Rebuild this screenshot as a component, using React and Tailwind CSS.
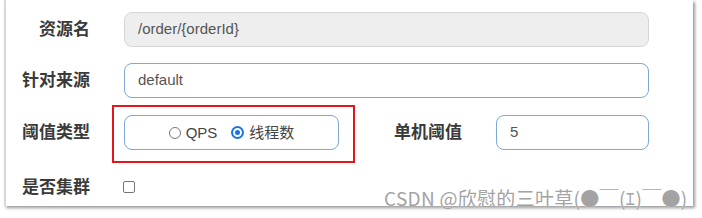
import React from "react";

const labelCls =
  "w-[84px] shrink-0 text-right text-[17px] font-bold text-[#3a3a3a] leading-none";

function Radio({ checked, label }) {
  return (
    <label className="flex items-center gap-[5px]">
      {checked ? (
        <span className="w-[13px] h-[13px] rounded-full bg-[#1a73e8] flex items-center justify-center">
          <span className="w-[9px] h-[9px] rounded-full border-[2px] border-white bg-[#1a73e8]" />
        </span>
      ) : (
        <span className="w-[12px] h-[12px] rounded-full border border-[#767676] bg-white" />
      )}
      <span className="text-[15px] text-[#444] leading-none">{label}</span>
    </label>
  );
}

export default function App() {
  return (
    <div
      className="relative w-[702px] h-[218px] bg-white overflow-hidden"
      style={{ fontFamily: '"Liberation Sans", "Noto Sans CJK SC", sans-serif' }}
    >
      <div className="relative ml-[4px] w-[689px] h-[206px] bg-white border-l-2 border-[#d9d9d9] shadow-[2px_2px_3px_rgba(0,0,0,0.4)] pt-[12px]">
        {/* 资源名 */}
        <div className="flex items-center h-[35px]">
          <span className={labelCls}>资源名</span>
          <div className="ml-[34px] w-[525px] h-[35px] flex items-center px-[13px] rounded-[8px] bg-[#eeeeee] border border-[#d6d6d6] text-[15px] text-[#555]">
            /order/{"{orderId}"}
          </div>
        </div>

        {/* 针对来源 */}
        <div className="flex items-center h-[35px] mt-[16px]">
          <span className={labelCls}>针对来源</span>
          <div className="ml-[34px] w-[525px] h-[35px] flex items-center px-[13px] rounded-[8px] bg-white border border-[#7ea8d6] text-[15px] text-[#555]">
            default
          </div>
        </div>

        {/* 阈值类型 / 单机阈值 */}
        <div className="flex items-center h-[35px] mt-[17px]">
          <span className={labelCls}>阈值类型</span>
          <div className="ml-[34px] w-[215px] h-[35px] flex items-center justify-center gap-[14px] rounded-[8px] bg-white border border-[#7ea8d6]">
            <Radio label="QPS" />
            <Radio checked label="线程数" />
          </div>
          <span className="w-[123px] shrink-0 text-right text-[17px] font-bold text-[#3a3a3a] leading-none">
            单机阈值
          </span>
          <div className="ml-[34px] w-[153px] h-[35px] flex items-center px-[13px] rounded-[8px] bg-white border border-[#7ea8d6] text-[15px] text-[#555]">
            5
          </div>
        </div>

        {/* 是否集群 */}
        <div className="flex items-center h-[20px] mt-[27px]">
          <span className={labelCls}>是否集群</span>
          <span className="ml-[33px] w-[12px] h-[12px] rounded-[2px] border border-[#767676] bg-white" />
        </div>

        {/* annotation box */}
        <div className="absolute left-[106px] top-[105px] w-[243px] h-[58px] border-2 border-[#e3161c]" />
      </div>

      <div
        className="absolute left-[384px] top-[187px] text-[19px] leading-[22px] tracking-[0.3px] text-[#a3a3a3] whitespace-nowrap"
        style={{ fontFamily: '"Noto Sans CJK SC", "Liberation Sans", sans-serif', textShadow: "0 0 1px #fff" }}
      >
        CSDN @欣慰的三叶草(●￣(ｴ)￣●)
      </div>
    </div>
  );
}
